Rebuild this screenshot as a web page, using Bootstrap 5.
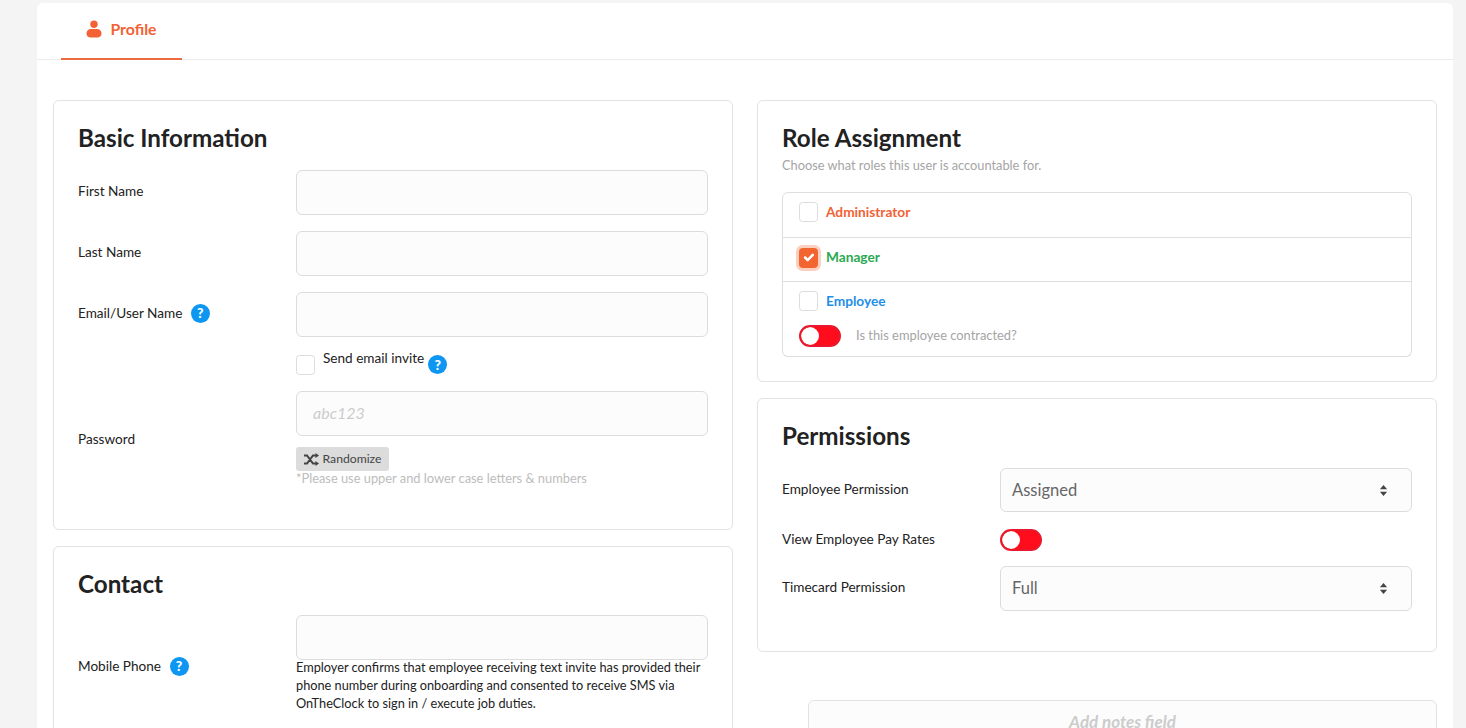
<!DOCTYPE html>
<html lang="en">
<head>
<meta charset="utf-8">
<title>Profile</title>
<link href="https://cdn.jsdelivr.net/npm/bootstrap@5.3.0/dist/css/bootstrap.min.css" rel="stylesheet">
<style>
html,body{height:728px;overflow:hidden}
body{background:#f4f4f4;font-family:Lato,"Liberation Sans",sans-serif;font-size:13.600px;color:#222;padding:3px 13px 0 37px}
.sheet{background:#fff;border-radius:6px 6px 0 0;height:1000px}
.tabbar{height:57px;border-bottom:1px solid #ececec;padding-left:24px}
.tabbar .nav-link{height:57px;width:121px;padding:0 0 4px;color:#f26235;font-size:15.800px;font-weight:700;border:0;border-bottom:2px solid #ee6a42;border-radius:0;display:flex;align-items:center;justify-content:center;gap:8px;background:none}
.inner{padding:40px 16px 0}
.panel{border:1px solid #e2e2e2;border-radius:6px;padding:24px;background:#fff}
.panel h2{font-size:24.200px;font-weight:700;color:#222;margin:0;line-height:25px}
.panel-basic{height:430px}.panel-role{height:282px}.panel-perm{height:254px}
.headgap{margin-bottom:20px!important}
.headgap-tight{margin-bottom:19px!important}
.labelcol{line-height:18px;padding-bottom:4px}
.toggle-row{height:22px}
.fld{height:45px;background-color:#fcfcfc;border:1px solid #dcdcdc;border-radius:6px;font-size:16px;padding:6px 16px 8px}
.fld::placeholder{color:#ccc;font-style:italic}
.form-select.fld{color:#666;padding-left:11px;font-size:16.500px;padding-top:6px;padding-bottom:6px;background-image:url("data:image/svg+xml,%3Csvg xmlns='http://www.w3.org/2000/svg' viewBox='0 0 10 14'%3E%3Cpath fill='%23444' d='M5 1l4 4.500H1zM5 13L1 8.500h8z'/%3E%3C/svg%3E");background-size:9px 13px;background-position:right 23px center;background-repeat:no-repeat}
.form-select.fld-short{height:44px}
.lbl{margin:0;color:#222;vertical-align:middle}
.ask{display:inline-flex;width:19px;height:19px;border-radius:50%;background:#0d96f2;color:#fff;font-size:14px;font-weight:900;align-items:center;justify-content:center;line-height:1;vertical-align:middle}
.ask-near{margin-left:5px}
.tick{width:19px;height:20px;margin:0;background-color:#fff;border:1px solid #dcdcdc;border-radius:4px;flex:none}
.tick:checked{background-color:#f26430;border-color:#f26430;box-shadow:0 0 0 3px #fbd0c0}
.flip.form-check-input{width:42px;height:22px;margin:0;background-color:#ff0d1d;border:2px solid #e8192c;float:none;background-image:url("data:image/svg+xml,%3Csvg xmlns='http://www.w3.org/2000/svg' viewBox='-4 -4 8 8'%3E%3Ccircle r='4' fill='%23fff'/%3E%3C/svg%3E");background-position:left center;border-radius:11px}
.form-switch.flipwrap{padding:0;margin:0;min-height:0;display:flex}
.inviterow{padding-top:2px}
.invitetext{line-height:17px;margin-top:-5px}
.shuffle{background:#dcdcdc;border:0;border-radius:3px;color:#444;font-size:12.200px;height:24px;width:93px;padding:0;display:flex;align-items:center;justify-content:center;gap:4px;margin-top:11px}
.hint{color:#bdbdbd;font-size:12.850px;line-height:15px}
.sub{color:#a5a5a5;font-size:12.800px;line-height:15px;margin:8px 0 19px}
.roles{border-radius:6px}
.roles .list-group-item{padding:0 16px 4px;border-color:#dedede;display:flex;align-items:center;gap:8px;font-weight:700;font-size:13.700px}
.roles .r-a{height:46px;color:#f26235;padding-bottom:6px}.r-m{height:44px;color:#2aa952}
.roles .r-e{display:block;height:75px;color:#1f8fe8;padding-top:9px}
.contract{color:#a5a5a5;font-weight:400;font-size:12.900px;margin-top:13px}
.contract-text{margin-left:15px}
.notes{margin:48px 0 0 51px;height:60px;background:#fcfcfc;border:1px solid #e2e2e2;border-radius:6px;text-align:center;color:#ccc;font-style:italic;font-size:17px;font-weight:700;padding-top:8px}
.smallprint{font-size:12.750px;line-height:18px;color:#222;margin-top:-2px}
</style>
</head>
<body>
<div class="sheet">
  <div class="tabbar">
    <ul class="nav">
      <li class="nav-item"><a class="nav-link active" href="#">
        <svg width="16" height="18" viewBox="0 0 16 18"><circle cx="8" cy="4.200" r="3.700" fill="#f26235"/><path fill="#f26235" d="M0.500 13.500C0.500 10.500 2.500 9 5 9h6c2.500 0 4.500 1.500 4.500 4.500 0 2.800-2 4-4 4h-7c-2 0-4-1.200-4-4z"/></svg>
        Profile</a></li>
    </ul>
  </div>
  <div class="inner">
    <div class="row g-4">
      <div class="col-6">
        <section class="panel panel-basic mb-3">
          <h2 class="headgap">Basic Information</h2>
          <div class="row align-items-center mb-3"><div class="col-4 labelcol"><label class="lbl">First Name</label></div><div class="col-8"><input class="form-control fld" type="text"></div></div>
          <div class="row align-items-center mb-3"><div class="col-4 labelcol"><label class="lbl">Last Name</label></div><div class="col-8"><input class="form-control fld" type="text"></div></div>
          <div class="row align-items-center mb-3"><div class="col-4 labelcol"><label class="lbl">Email/User Name</label> <span class="ask ask-near">?</span></div><div class="col-8"><input class="form-control fld" type="text"></div></div>
          <div class="row mb-3 inviterow"><div class="col-4"></div><div class="col-8 d-flex align-items-start"><input class="form-check-input tick mt-0" type="checkbox"><span class="ms-2 invitetext">Send email invite</span><span class="ask ms-1">?</span></div></div>
          <div class="row align-items-center"><div class="col-4 labelcol pt-1"><label class="lbl">Password</label></div><div class="col-8">
            <input class="form-control fld" type="text" placeholder="abc123">
            <button class="btn shuffle" type="button">
              <svg width="15" height="13" viewBox="0 0 15 13" fill="none" stroke="#444" stroke-width="2"><path d="M0 2.500h3l6 8h3M0 10.500h3l6-8h3"/><path fill="#444" stroke="none" d="M11.500 0L15 2.500 11.500 5zM11.500 8L15 10.500 11.500 13z"/></svg>
              Randomize</button>
            <div class="hint">*Please use upper and lower case letters &amp; numbers</div>
          </div></div>
        </section>
        <section class="panel">
          <h2 class="headgap-tight">Contact</h2>
          <div class="row align-items-center"><div class="col-4 labelcol pt-2"><label class="lbl">Mobile Phone</label> <span class="ask ask-near">?</span></div><div class="col-8"><input class="form-control fld" type="text">
            <div class="smallprint">Employer confirms that employee receiving text invite has provided their phone number during onboarding and consented to receive SMS via OnTheClock to sign in / execute job duties.</div></div></div>
        </section>
      </div>
      <div class="col-6">
        <section class="panel panel-role mb-3">
          <h2>Role Assignment</h2>
          <p class="sub">Choose what roles this user is accountable for.</p>
          <ul class="list-group roles">
            <li class="list-group-item r-a"><input class="form-check-input tick mt-0" type="checkbox">Administrator</li>
            <li class="list-group-item r-m"><input class="form-check-input tick mt-0" type="checkbox" checked>Manager</li>
            <li class="list-group-item r-e">
              <div class="d-flex align-items-center gap-2"><input class="form-check-input tick mt-0" type="checkbox">Employee</div>
              <div class="d-flex align-items-center contract"><div class="form-check form-switch flipwrap"><input class="form-check-input flip" type="checkbox" role="switch"></div><span class="contract-text">Is this employee contracted?</span></div>
            </li>
          </ul>
        </section>
        <section class="panel panel-perm">
          <h2 class="headgap">Permissions</h2>
          <div class="row align-items-center mb-3"><div class="col-4 labelcol"><label class="lbl">Employee Permission</label></div><div class="col-8"><select class="form-select fld fld-short"><option>Assigned</option></select></div></div>
          <div class="row align-items-center mb-3 toggle-row"><div class="col-4 labelcol"><label class="lbl">View Employee Pay Rates</label></div><div class="col-8"><div class="form-check form-switch flipwrap"><input class="form-check-input flip" type="checkbox" role="switch"></div></div></div>
          <div class="row align-items-center"><div class="col-4 labelcol"><label class="lbl">Timecard Permission</label></div><div class="col-8"><select class="form-select fld"><option>Full</option></select></div></div>
        </section>
        <div class="notes">Add notes field</div>
      </div>
    </div>
  </div>
</div>
<script src="https://cdn.jsdelivr.net/npm/bootstrap@5.3.0/dist/js/bootstrap.bundle.min.js"></script>
</body>
</html>
